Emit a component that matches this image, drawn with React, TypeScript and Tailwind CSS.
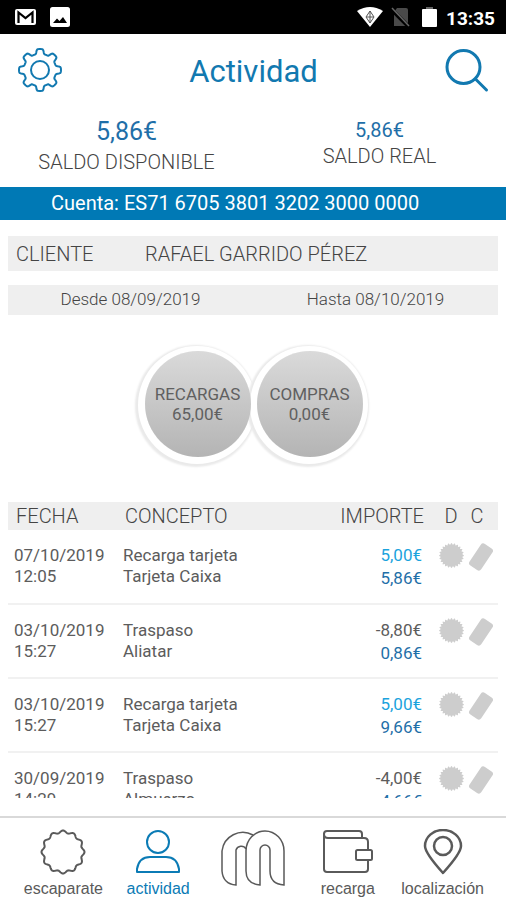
import type { ReactNode } from "react";

type Movement = {
	date: string;
	time: string;
	concept: string;
	detail: string;
	amount: string;
	balance: string;
	credit?: boolean;
};

const MOVEMENTS: Movement[] = [
	{ date: "07/10/2019", time: "12:05", concept: "Recarga tarjeta", detail: "Tarjeta Caixa", amount: "5,00€", balance: "5,86€", credit: true },
	{ date: "03/10/2019", time: "15:27", concept: "Traspaso", detail: "Aliatar", amount: "-8,80€", balance: "0,86€" },
	{ date: "03/10/2019", time: "15:27", concept: "Recarga tarjeta", detail: "Tarjeta Caixa", amount: "5,00€", balance: "9,66€", credit: true },
	{ date: "30/09/2019", time: "14:29", concept: "Traspaso", detail: "Almuerzo", amount: "-4,00€", balance: "4,66€" },
];

// Closed outline around (c, c) whose radius follows the given function of the angle.
function radialPath(c: number, radius: (a: number) => number) {
	const points: string[] = [];
	for (let i = 0; i < 240; i++) {
		const a = (i / 240) * Math.PI * 2;
		const r = radius(a);
		points.push(`${(c + r * Math.sin(a)).toFixed(2)} ${(c - r * Math.cos(a)).toFixed(2)}`);
	}
	return `M${points.join("L")}Z`;
}

const GEAR = radialPath(23, (a) => 18.6 + 2.4 * Math.tanh(2.6 * Math.cos(8 * a)));
const BADGE = radialPath(23, (a) => 20.3 + 1.2 * Math.cos(12 * a));
const SEAL = radialPath(12, (a) => 11.2 + 0.8 * Math.cos(24 * a));

function GearIcon() {
	return (
		<svg className="size-[46px]" viewBox="0 0 46 46" fill="none" stroke="currentColor" strokeWidth="2" strokeLinejoin="round">
			<path d={GEAR} />
			<circle cx="23" cy="23" r="9" />
		</svg>
	);
}

function SearchIcon() {
	return (
		<svg className="size-[46px]" viewBox="0 0 46 46" fill="none" stroke="currentColor" strokeWidth="3" strokeLinecap="round">
			<circle cx="19.500" cy="20" r="16.500" />
			<path d="M31.500 32L42.500 43" />
		</svg>
	);
}

function StatusBar() {
	return (
		<div className="flex h-[34px] shrink-0 items-center bg-black pl-[15px] pr-[11px] text-white">
			<svg className="h-[18px] w-[21px]" viewBox="0 0 21 18">
				<rect x="0" y="1" width="21" height="16" rx="2" fill="#fff" />
				<path d="M3.500 15V4.500L10.500 10L17.500 4.500V15" fill="none" stroke="#000" strokeWidth="2.200" />
			</svg>
			<svg className="ml-[14px] size-5" viewBox="0 0 20 20">
				<rect x="0" y="0" width="20" height="20" rx="2.500" fill="#fff" />
				<path d="M3 16L7 11.500L9.500 14L13 10L17 16Z" fill="#000" />
			</svg>
			<div className="grow" />
			<svg className="h-5 w-[26px]" viewBox="0 0 26 20">
				<path d="M0 4Q13 -4 26 4L13 20Z" fill="#fff" />
				<path d="M13 4L17 10L13 16L9 10Z M9.500 10H16.500 M13 4V16" fill="none" stroke="#555" />
			</svg>
			<svg className="ml-2 h-5 w-[19px]" viewBox="0 0 19 20">
				<path d="M6 1H15Q17 1 17 3V19H3V5Z" fill="#4a4a4a" />
				<path d="M0 2L18 20" stroke="#000" strokeWidth="4" />
				<path d="M1 1L18 19" stroke="#666" strokeWidth="1.500" />
			</svg>
			<svg className="ml-3 h-[22px] w-[15px]" viewBox="0 0 15 22">
				<rect x="4" y="1" width="7" height="3" fill="#666" />
				<rect x="0" y="3" width="15" height="18" rx="1" fill="#fff" />
			</svg>
			<span className="ml-[9px] mt-1 text-[19px] font-bold leading-6">13:35</span>
		</div>
	);
}

function Balance({ amount, label, small }: { amount: string; label: string; small?: boolean }) {
	return (
		<div className="text-center">
			<p className={small ? "text-[20px] leading-6 text-[#1f6fa8]" : "text-[25px] leading-7 text-[#1f6fa8]"}>{amount}</p>
			<p className={small ? "text-[20px] font-light leading-7" : "text-[20px] font-light leading-8"}>{label}</p>
		</div>
	);
}

function Total({ label, amount }: { label: string; amount: string }) {
	return (
		<div className="rounded-full shadow-[-1px_1px_0_6px_#fff,-2px_2px_2px_8px_#eaeaea]">
			<button
				type="button"
				className="relative z-10 block size-[106px] rounded-full bg-linear-to-b from-[#dadada] to-[#b4b4b4] text-[17px] leading-5 text-[#606060]"
			>
				{label}
				<br />
				{amount}
			</button>
		</div>
	);
}

function SealIcon() {
	return (
		<svg className="size-[25px]" viewBox="0 0 24 24" fill="#cdcdcd">
			<path d={SEAL} />
		</svg>
	);
}

function CardIcon() {
	return (
		<svg className="h-7 w-[26px]" viewBox="0 0 26 28">
			<rect x="6" y="1" width="14" height="26" rx="3" fill="#cdcdcd" transform="rotate(34 13 14)" />
		</svg>
	);
}

function Tab({ label, active, children }: { label?: string; active?: boolean; children: ReactNode }) {
	return (
		<a
			href="#"
			aria-label={label ?? "inicio"}
			className={
				active
					? "flex flex-1 flex-col items-center font-['Liberation_Sans',sans-serif] text-[16px] leading-5 text-[#0b7bb5]"
					: "flex flex-1 flex-col items-center font-['Liberation_Sans',sans-serif] text-[16px] leading-5 text-[#5a5a5a]"
			}
		>
			{children}
			{label && <span>{label}</span>}
		</a>
	);
}

export default function App() {
	return (
		<div className="flex h-screen flex-col overflow-hidden bg-white font-[Roboto,sans-serif] text-[#444]">
			<StatusBar />
			<header className="flex h-[72px] shrink-0 items-center justify-between pl-[17px] pr-4 text-[#1279b0]">
				<button type="button" aria-label="Ajustes">
					<GearIcon />
				</button>
				<h1 className="pt-1 text-[31px] leading-9">Actividad</h1>
				<button type="button" aria-label="Buscar">
					<SearchIcon />
				</button>
			</header>

			<section className="grid h-[81px] shrink-0 grid-cols-2 pt-3">
				<Balance amount="5,86€" label="SALDO DISPONIBLE" />
				<Balance amount="5,86€" label="SALDO REAL" small />
			</section>

			<p className="h-[33px] shrink-0 bg-[#0079b5] pl-[51px] text-[20px] leading-8 text-white">Cuenta: ES71 6705 3801 3202 3000 0000</p>

			<main className="mb-[18px] min-h-0 flex-1 overflow-hidden px-2 pt-4">
				<p className="flex h-[35px] items-center bg-[#efefef] pl-2 text-[20px] font-light">
					<span className="w-[129px]">CLIENTE</span>
					<span>RAFAEL GARRIDO PÉREZ</span>
				</p>
				<p className="mt-[14px] grid h-[30px] grid-cols-2 items-center bg-[#efefef] text-center text-[17px] font-light">
					<span>Desde 08/09/2019</span>
					<span>Hasta 08/10/2019</span>
				</p>

				<div className="flex justify-center gap-[6px] pb-[45px] pl-px pt-9">
					<Total label="RECARGAS" amount="65,00€" />
					<Total label="COMPRAS" amount="0,00€" />
				</div>

				<table className="w-full table-fixed text-left">
					<thead className="bg-[#efefef] text-[20px] leading-7">
						<tr>
							<th className="w-[109px] pl-2 font-light">FECHA</th>
							<th className="pl-2 font-light">CONCEPTO</th>
							<th className="w-28 text-right font-light">IMPORTE</th>
							<th className="w-[44px] pl-[10px] text-center font-light">D</th>
							<th className="w-[30px] pr-3 text-center font-light">C</th>
						</tr>
					</thead>
					<tbody className="text-[17px] leading-[21px] text-[#5c5c5c]">
						{MOVEMENTS.map((m, i) => (
							<tr key={i} className="h-[74px] border-b-2 border-[#f1f1f1] align-top">
								<td className="pl-[6px] pt-[15px]">
									{m.date}
									<br />
									{m.time}
								</td>
								<td className="pl-[6px] pt-[15px]">
									{m.concept}
									<br />
									{m.detail}
								</td>
								<td className="pr-[2px] pt-[14px] text-right leading-[23px]">
									<span className={m.credit ? "text-[#1ba3dd]" : ""}>{m.amount}</span>
									<br />
									<span className="text-[#1f6fa8]">{m.balance}</span>
								</td>
								<td className="pl-[15px] pt-[13px]">
									<SealIcon />
								</td>
								<td className="pt-[13px]">
									<CardIcon />
								</td>
							</tr>
						))}
					</tbody>
				</table>
			</main>

			<nav className="flex h-[84px] shrink-0 border-t-2 border-[#d9d9d9] px-4 pt-[11px]">
				<Tab label="escaparate">
					<svg className="h-[50px] w-[46px]" viewBox="0 0 46 50" fill="none" stroke="currentColor" strokeWidth="2" strokeLinejoin="round">
						<path d={BADGE} />
					</svg>
				</Tab>
				<Tab label="actividad" active>
					<svg className="h-[50px] w-[46px]" viewBox="0 0 46 50" fill="none" stroke="currentColor" strokeWidth="2" strokeLinejoin="round">
						<circle cx="23" cy="13" r="11" />
						<path d="M2 43V40Q4 28 15 28H31Q42 28 44 40V43Z" />
					</svg>
				</Tab>
				<Tab>
					<svg className="h-[60px] w-[66px]" viewBox="0 0 66 60" fill="none" stroke="currentColor" strokeWidth="1.500">
						<path d="M33 6A21 21 0 0 0 2 22V42Q3 55 16 56V21A5.500 5.500 0 0 1 26 20" />
						<path d="M40 56Q26 55 26 42V22A19 20 0 0 1 64 22V56Q50 55 50 42V21A5 5 0 0 0 40 21Z" />
					</svg>
				</Tab>
				<Tab label="recarga">
					<svg className="h-[50px] w-[52px]" viewBox="0 0 52 50" fill="none" stroke="currentColor" strokeWidth="2" strokeLinejoin="round">
						<path d="M46 21V13Q46 9 42 9H6Q2 9 2 5V40Q2 43 5 43H43Q46 43 46 40V31" />
						<path d="M2 5Q2 2 5 2H37Q40 2 40 5V9" />
						<rect x="34" y="21" width="16" height="10" rx="1.500" />
					</svg>
				</Tab>
				<Tab label="localización">
					<svg className="h-[50px] w-[40px]" viewBox="0 0 40 50" fill="none" stroke="currentColor" strokeWidth="2.500" strokeLinejoin="round">
						<path d="M20 44Q2 24 2 17A18 16 0 0 1 38 17Q38 24 20 44Z" />
						<circle cx="20" cy="17" r="9" />
					</svg>
				</Tab>
			</nav>
		</div>
	);
}
